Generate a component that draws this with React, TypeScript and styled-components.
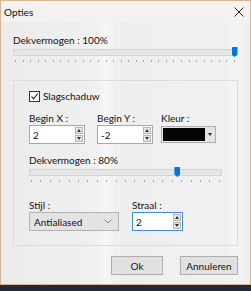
import React from "react";
import styled, { createGlobalStyle } from "styled-components";

const GlobalStyle = createGlobalStyle`
  html, body { margin: 0; padding: 0; }
  body {
    background: #23293a;
    font-family: Lato, "Open Sans", "Noto Sans", sans-serif;
    font-size: 10px;
    color: #111;
    width: 251px;
    height: 291px;
    overflow: hidden;
  }
`;

const Window = styled.div`
  box-sizing: border-box;
  width: 251px;
  height: 285px;
  border: 1px solid #d8b490;
  background: linear-gradient(90deg, #ecebea 0%, #f0f0f0 38%, #f7f7f7 42%, #efefef 46%, #f0f0f0 90%, #f4f4f4 94%, #eeeeee 100%);
  display: flex;
  flex-direction: column;
`;

const TitleBar = styled.div`
  height: 21px;
  display: flex;
  align-items: center;
  justify-content: space-between;
  padding: 0 6px 0 3px;
  background: #f4f2f0;
`;

const Title = styled.span`
  font-size: 10px;
  color: #111;
`;

const Body = styled.div`
  flex: 1;
  display: flex;
  flex-direction: column;
  padding: 12px 12px 0 12px;
`;

const Label = styled.div<{ $mt?: number }>`
  font-size: 10px;
  line-height: 12px;
  height: 12px;
  margin-top: ${(p) => p.$mt ?? 0}px;
  color: #111;
  white-space: nowrap;
`;

const SliderWrap = styled.div<{ $w: number }>`
  width: ${(p) => p.$w}px;
  display: flex;
  flex-direction: column;
`;

const TrackArea = styled.div`
  position: relative;
  margin-top: 1px;
  height: 10px;
  display: flex;
  align-items: center;
`;

const Track = styled.div`
  box-sizing: border-box;
  flex: 1;
  height: 7px;
  background: #e6e6e6;
  border: 1px solid #d4d4d4;
`;

const Thumb = styled.div`
  position: absolute;
  top: 0;
  width: 6px;
  height: 10px;
  margin-left: -3px;
  background: #0078d7;
  border-radius: 1px 1px 0 0;
  clip-path: polygon(0 0, 100% 0, 100% 75%, 50% 100%, 0 75%);
`;

const Ticks = styled.div`
  display: flex;
  justify-content: space-between;
  padding: 0 2px;
  margin-top: 3px;
  height: 2px;
`;

const Tick = styled.span`
  width: 1px;
  height: 2px;
  background: #a3a3a3;
`;

function Slider({ width, value, ticks }: { width: number; value: number; ticks: number }) {
  return (
    <SliderWrap $w={width}>
      <TrackArea>
        <Track />
        <Thumb style={{ left: `${value}%` }} />
      </TrackArea>
      <Ticks>
        {Array.from({ length: ticks }).map((_, i) => (
          <Tick key={i} />
        ))}
      </Ticks>
    </SliderWrap>
  );
}

const Group = styled.div`
  box-sizing: border-box;
  margin-top: 18px;
  height: 166px;
  border: 1px solid #dcdcdc;
  padding: 10px 15px 0 15px;
  display: flex;
  flex-direction: column;
`;

const CheckRow = styled.label`
  display: flex;
  align-items: center;
  gap: 3px;
  height: 11px;
  line-height: 11px;
`;

const CheckBox = styled.span`
  box-sizing: border-box;
  width: 11px;
  height: 11px;
  border: 1px solid #333;
  background: #fff;
  display: flex;
  align-items: center;
  justify-content: center;
`;

const FieldRow = styled.div<{ $mt: number }>`
  display: flex;
  margin-top: ${(p) => p.$mt}px;
`;

const Field = styled.div<{ $w: number }>`
  width: ${(p) => p.$w}px;
  display: flex;
  flex-direction: column;
  gap: 1px;
`;

const SpinBox = styled.div<{ $w: number; $focus?: boolean }>`
  box-sizing: border-box;
  width: ${(p) => p.$w}px;
  height: 19px;
  border: 1px solid ${(p) => (p.$focus ? "#3d8ee0" : "#a8a8a8")};
  background: #fff;
  display: flex;
  align-items: center;
  padding-left: 3px;
`;

const SpinValue = styled.span`
  flex: 1;
  font-size: 10px;
`;

const SpinButtons = styled.div`
  display: flex;
  flex-direction: column;
  gap: 1px;
  margin-right: 1px;
`;

const SpinBtn = styled.span`
  box-sizing: border-box;
  width: 8px;
  height: 7px;
  background: #e8e8e8;
  border: 1px solid #b5b5b5;
  display: flex;
  align-items: center;
  justify-content: center;
`;

const Arrow = ({ up }: { up?: boolean }) => (
  <svg width="4" height="3" viewBox="0 0 4 3">
    <path d={up ? "M0 3 L2 0 L4 3 Z" : "M0 0 L4 0 L2 3 Z"} fill="#333" />
  </svg>
);

function Spin({ value, width, focus }: { value: string; width: number; focus?: boolean }) {
  return (
    <SpinBox $w={width} $focus={focus}>
      <SpinValue>{value}</SpinValue>
      <SpinButtons>
        <SpinBtn>
          <Arrow up />
        </SpinBtn>
        <SpinBtn>
          <Arrow />
        </SpinBtn>
      </SpinButtons>
    </SpinBox>
  );
}

const ColorCombo = styled.div`
  box-sizing: border-box;
  width: 55px;
  height: 17px;
  margin-top: 1px;
  border: 1px solid #b0b0b0;
  background: #e4e4e4;
  display: flex;
  align-items: center;
  padding: 1px;
  gap: 3px;
`;

const Swatch = styled.span`
  width: 42px;
  height: 13px;
  background: #050505;
`;

const Select = styled.div`
  box-sizing: border-box;
  width: 90px;
  height: 19px;
  border: 1px solid #b3b3b3;
  background: #e3e3e3;
  display: flex;
  align-items: center;
  justify-content: space-between;
  padding: 0 6px 0 4px;
  font-size: 10px;
`;

const Footer = styled.div`
  display: flex;
  justify-content: flex-end;
  gap: 17px;
  margin-top: 10px;
`;

const Button = styled.button<{ $w: number }>`
  box-sizing: border-box;
  width: ${(p) => p.$w}px;
  height: 19px;
  border: 1px solid #adadad;
  background: #e1e1e1;
  font-family: inherit;
  font-size: 10px;
  color: #111;
  padding: 0;
`;

export default function App() {
  return (
    <>
      <GlobalStyle />
      <Window>
        <TitleBar>
          <Title>Opties</Title>
          <svg width="10" height="10" viewBox="0 0 10 10">
            <path d="M0.5 0.5 L9.5 9.5 M9.5 0.5 L0.5 9.5" stroke="#222" strokeWidth="1" />
          </svg>
        </TitleBar>
        <Body>
          <Label>Dekvermogen : 100%</Label>
          <Slider width={224} value={98.9} ticks={30} />
          <Group>
            <CheckRow>
              <CheckBox>
                <svg width="9" height="9" viewBox="0 0 9 9">
                  <path d="M1.5 4.5 L3.5 6.8 L7.8 1.5" stroke="#222" strokeWidth="1.1" fill="none" />
                </svg>
              </CheckBox>
              <span>Slagschaduw</span>
            </CheckRow>
            <FieldRow $mt={10}>
              <Field $w={68}>
                <Label>Begin X :</Label>
                <Spin value="2" width={56} />
              </Field>
              <Field $w={64}>
                <Label>Begin Y :</Label>
                <Spin value="-2" width={56} />
              </Field>
              <Field $w={60}>
                <Label>Kleur :</Label>
                <ColorCombo>
                  <Swatch />
                  <Arrow />
                </ColorCombo>
              </Field>
            </FieldRow>
            <Label $mt={10}>Dekvermogen : 80%</Label>
            <Slider width={193} value={76.9} ticks={21} />
            <FieldRow $mt={17}>
              <Field $w={103}>
                <Label>Stijl :</Label>
                <Select>
                  <span>Antialiased</span>
                  <svg width="8" height="5" viewBox="0 0 8 5">
                    <path d="M0.5 0.5 L4 4 L7.5 0.5" stroke="#888" fill="none" />
                  </svg>
                </Select>
              </Field>
              <Field $w={52}>
                <Label>Straal :</Label>
                <Spin value="2" width={51} focus />
              </Field>
            </FieldRow>
          </Group>
          <Footer>
            <Button $w={52}>Ok</Button>
            <Button $w={58}>Annuleren</Button>
          </Footer>
        </Body>
      </Window>
    </>
  );
}
